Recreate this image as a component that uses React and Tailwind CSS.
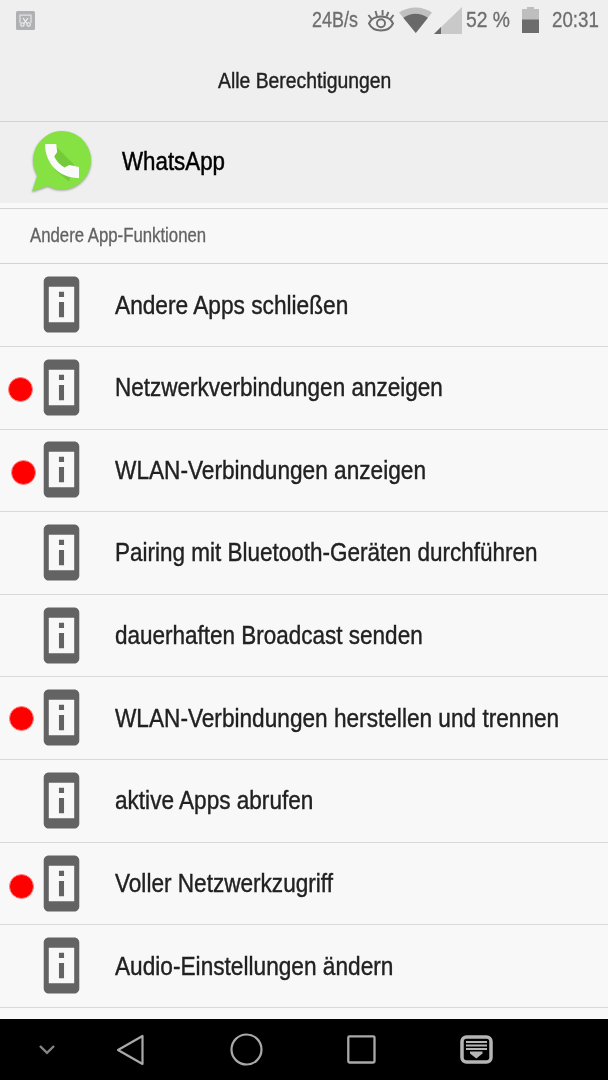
import { useLayoutEffect, useRef } from 'react'
import { MdPermDeviceInformation } from 'react-icons/md'

const PERMISSIONS = [
  { label: 'Andere Apps schließen', width: 233 },
  { label: 'Netzwerkverbindungen anzeigen', width: 328, dot: 'left-[8px] top-[30px]' },
  { label: 'WLAN-Verbindungen anzeigen', width: 311, dot: 'left-[11px] top-[30px]' },
  { label: 'Pairing mit Bluetooth-Geräten durchführen', width: 423 },
  { label: 'dauerhaften Broadcast senden', width: 308 },
  { label: 'WLAN-Verbindungen herstellen und trennen', width: 444, dot: 'left-[9px] top-[29px]' },
  { label: 'aktive Apps abrufen', width: 198 },
  { label: 'Voller Netzwerkzugriff', width: 218, dot: 'left-[9px] top-[31px]' },
  { label: 'Audio-Einstellungen ändern', width: 278 },
]

// Condensed text: squeezes the label horizontally to the given width
function Narrow({ children, width, className = '' }) {
  const ref = useRef(null)

  useLayoutEffect(() => {
    const el = ref.current
    el.style.transform = `scaleX(${width / el.offsetWidth})`
  }, [children, width])

  return (
    <span className={`block shrink-0 ${className}`} style={{ width }}>
      <span ref={ref} className="inline-block whitespace-nowrap origin-left">{children}</span>
    </span>
  )
}

function StatusBar() {
  return (
    <div className="h-10 shrink-0 flex items-center text-[#6e6e6e] text-[21.5px] leading-none [-webkit-text-stroke:0.3px_#6e6e6e]">
      <svg className="ml-4 w-[19px] h-[19px]" viewBox="0 0 19 19" fill="none">
        <rect width="19" height="19" rx="1.5" fill="#b0b1b4" />
        <path d="M4 12V4.2h11V12" stroke="#e4e4e4" strokeWidth="1.2" />
        <path d="M7 7l4 5.5M12 7l-4 5.5" stroke="#f2f2f2" strokeWidth="1.2" />
        <circle cx="6.4" cy="13.5" r="1.7" stroke="#f2f2f2" strokeWidth="1.1" />
        <circle cx="12.6" cy="13.5" r="1.7" stroke="#f2f2f2" strokeWidth="1.1" />
      </svg>
      <div className="ml-auto flex items-center pr-[9px]">
        <Narrow width={46} className="pt-px">24B/s</Narrow>
        <svg className="ml-[9px] w-[28px] h-[24px]" viewBox="0 0 28 24" fill="none" stroke="#6e6e6e" strokeWidth="1.9">
          <path d="M2 15.500C4 11 8.500 8.500 14 8.500s10 2.500 12 7c-2 4.500-6.500 7-12 7s-10-2.500-12-7Z" />
          <circle cx="14" cy="15.300" r="4" />
          <path d="M1.500 7l3 4M8.500 3l1.400 5M15.600 2v5.500M21.500 4l-2 4.500M26.500 7l-3 4" />
        </svg>
        <svg className="ml-[4px] w-[34px] h-[26px]" viewBox="0 0 34 26">
          <path d="M0 5.500Q16.500-4.500 33 5.500L16.800 26Z" fill="#c0c0c0" />
          <path d="M4.300 10.800Q16.600 2.500 28.900 10.800L16.800 26Z" fill="#696969" />
        </svg>
        <svg className="ml-[1px] w-[28px] h-[27px]" viewBox="0 0 28 27">
          <path d="M0 27L28 0v27Z" fill="#c9c9c9" />
          <path d="M0 27l7-7v7Z" fill="#696969" />
        </svg>
        <Narrow width={44} className="ml-1 pt-px">52 %</Narrow>
        <svg className="ml-[12px] w-[18px] h-[26px]" viewBox="0 0 18 26">
          <path d="M0 2h5V0h7v2h5v11H0Z" fill="#bebebe" />
          <path d="M0 12.500h17V26H0Z" fill="#6c6c6c" />
        </svg>
        <Narrow width={47} className="ml-3 pt-px">20:31</Narrow>
      </div>
    </div>
  )
}

function AppHeader() {
  return (
    <div className="h-[81px] shrink-0 bg-[#efefef] flex items-center pl-[31px] pb-[3px]">
      <svg className="w-[62px] h-[64px] drop-shadow-[0_1px_1px_rgba(0,0,0,0.35)]" viewBox="0 0 62 64">
        <path d="M31 2a29.300 29.300 0 1 1-14.300 55L1 62.500l5.300-16A29.300 29.300 0 0 1 31 2Z" fill="#86e143" />
        <path d="M25.500 18L43 35.500l-5 17L24 41 16 22Z" fill="#75ca3a" />
        <path d="M14 15h11.200l1 8-3 4.500c2.300 4.700 5.600 8.300 10.300 11l4.800-2.600 9.700 2v11C29 49.500 14 35 14 15Z" fill="#fafafa" />
      </svg>
      <h2 className="ml-[29px] text-[26px] leading-none text-black [-webkit-text-stroke:0.5px_black]">
        <Narrow width={103}>WhatsApp</Narrow>
      </h2>
    </div>
  )
}

function PermissionRow({ label, width, dot }) {
  return (
    <li className="relative h-[82.670px] flex items-center border-b border-[#d9d9d9] pl-[30.500px] pb-px">
      {dot && <span className={`absolute w-[25px] h-[25px] rounded-full bg-[#ff0000] border border-[#ff8a8a] ${dot}`} />}
      <MdPermDeviceInformation className="w-[61px] h-[61px] text-[#636363]" />
      <span className="ml-[23.500px] text-[26px] leading-none text-[#212121] [-webkit-text-stroke:0.4px_#212121]">
        <Narrow width={width}>{label}</Narrow>
      </span>
    </li>
  )
}

function NavBar() {
  return (
    <nav className="h-[61px] shrink-0 bg-black flex items-center text-[#a9a9a9]">
      <svg className="ml-[38px] w-[18px] h-[12px]" viewBox="0 0 18 12" fill="none" stroke="#858585" strokeWidth="2.400">
        <path d="M2 2l7 6.800L16 2" />
      </svg>
      <svg className="ml-[60px] w-[30px] h-[32px]" viewBox="0 0 30 32" fill="none" stroke="currentColor" strokeWidth="2.200" strokeLinejoin="round">
        <path d="M2 16L26.500 2v28Z" />
      </svg>
      <svg className="ml-[84px] w-[33px] h-[33px]" viewBox="0 0 33 33" fill="none" stroke="currentColor" strokeWidth="2.200">
        <circle cx="16.500" cy="16.500" r="15" />
      </svg>
      <svg className="ml-[84px] w-[29px] h-[29px]" viewBox="0 0 29 29" fill="none" stroke="currentColor" strokeWidth="2.300">
        <rect x="1.300" y="1.300" width="26.200" height="26.200" rx="1.200" />
      </svg>
      <svg className="ml-[84px] w-[33px] h-[29px]" viewBox="0 0 33 29">
        <rect x="2" y="2" width="29" height="25" rx="4.500" fill="none" stroke="#b5b5b5" strokeWidth="3.500" />
        <path d="M6 7h21M6 10.500h21M6 14h21" stroke="#b5b5b5" strokeWidth="1.900" />
        <path d="M10 16.500h12.500v2l-6.200 5-6.300-5Z" fill="#b5b5b5" />
      </svg>
    </nav>
  )
}

export default function App() {
  return (
    <div className="w-[608px] h-[1080px] overflow-hidden flex flex-col bg-[#f8f8f8] font-['Liberation_Sans',sans-serif]">
      <header className="h-[122px] shrink-0 flex flex-col bg-[#efefef] border-b border-[#d3d3d3]">
        <StatusBar />
        <h1 className="flex-1 flex justify-center items-center pt-[2px] text-[22.500px] leading-none text-[#212121] [-webkit-text-stroke:0.4px_#212121]">
          <Narrow width={173}>Alle Berechtigungen</Narrow>
        </h1>
      </header>
      <AppHeader />

      <main className="flex-1 min-h-0 overflow-hidden pt-[5px]">
        <div className="h-[56.200px] flex items-center border-y border-[#d3d3d3] pl-[30px] pb-[2px] text-[20px] leading-none text-[#626262] [-webkit-text-stroke:0.3px_#626262]">
          <Narrow width={176}>Andere App-Funktionen</Narrow>
        </div>
        <ul>
          {PERMISSIONS.map((p) => <PermissionRow key={p.label} {...p} />)}
        </ul>
      </main>

      <NavBar />
    </div>
  )
}
